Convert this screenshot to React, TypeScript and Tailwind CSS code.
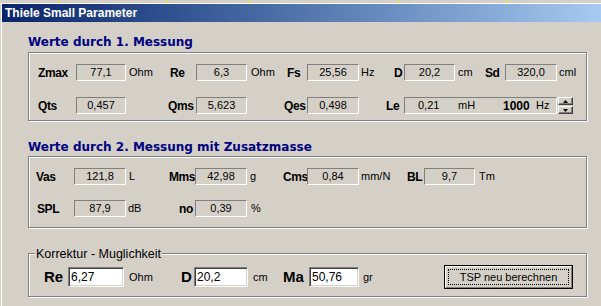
import type { ReactNode } from "react";

const sans = "font-['Liberation_Sans',Arial,sans-serif]";

function Box({ children, className }: { children: ReactNode; className?: string }) {
  return (
    <div
      className={`w-[559px] border border-[#808080] shadow-[inset_1px_1px_0_#ffffff,1px_1px_0_#ffffff] ${className ?? ""}`}
    >
      {children}
    </div>
  );
}

function Field({ className, children }: { className: string; children?: ReactNode }) {
  return (
    <div
      className={`h-[17px] shrink-0 border border-t-[#808080] border-l-[#808080] border-b-white border-r-white flex items-center justify-center text-[11px] text-black ${className}`}
    >
      {children}
    </div>
  );
}

function Label({ className, children }: { className: string; children: ReactNode }) {
  return (
    <span className={`shrink-0 whitespace-nowrap font-bold text-[12px] tracking-[-0.4px] text-black ${className}`}>
      {children}
    </span>
  );
}

function Unit({ className, children }: { className?: string; children: ReactNode }) {
  return <span className={`shrink-0 text-[11px] text-black ${className ?? ""}`}>{children}</span>;
}

function SpinButton({ up }: { up?: boolean }) {
  return (
    <div className="w-[15px] h-[8px] bg-[#d4d0c8] border border-t-white border-l-white border-b-[#404040] border-r-[#404040] shadow-[inset_-1px_-1px_0_#808080] flex items-center justify-center">
      <svg width="5" height="3" viewBox="0 0 5 3">
        {up ? <path d="M2.5 0 L5 3 L0 3 Z" fill="#000" /> : <path d="M0 0 L5 0 L2.5 3 Z" fill="#000" />}
      </svg>
    </div>
  );
}

function EditBox({ className, value }: { className: string; value: string }) {
  return (
    <input
      readOnly
      value={value}
      className={`h-[20px] shrink-0 bg-white border border-t-[#808080] border-l-[#808080] border-b-white border-r-white shadow-[inset_1px_1px_0_#404040,inset_-1px_-1px_0_#d4d0c8] pl-[2px] text-[12px] text-black outline-none ${className}`}
    />
  );
}

export default function App() {
  return (
    <div className={`w-[601px] h-[306px] overflow-hidden bg-[#d4d0c8] ${sans}`}>
      {/* strip behind the window */}
      <div className="h-[3px] flex">
        <div className="w-[58px]" />
        <div className="w-[1px] bg-[#f0f000]" />
        <div className="w-[107px]" />
        <div className="w-[1px] bg-[#f0f000]" />
        <div className="w-[81px]" />
        <div className="w-[1px] bg-[#f0f000]" />
        <div className="w-[150px]" />
        <div className="w-[1px] bg-[#f0f000]" />
        <div className="w-[107px]" />
        <div className="w-[1px] bg-[#f0f000]" />
      </div>
      <div className="h-[1px] bg-white" />

      <div className="flex h-[302px]">
        <div className="w-[1px]" />
        <div className="w-[1px] bg-white" />
        <div className="flex-1 flex flex-col">
          <div className="h-[18px] bg-linear-to-r from-[#0a246a] to-[#a6caf0] pl-[3px] leading-[18px] text-[12px] font-bold text-white">
            Thiele Small Parameter
          </div>

          <div className="pl-[26px] pt-[12px] flex flex-col">
            <div className="h-[16px] leading-[16px] text-[12px] font-bold text-[#000080] font-['DejaVu_Sans',Verdana,sans-serif]">
              Werte durch 1. Messung
            </div>
            <Box className="mt-[2px] pt-[11px] pb-[6px] flex flex-col gap-[16px]">
              <div className="flex items-center h-[17px] pl-[9px]">
                <Label className="w-[38px]">Zmax</Label>
                <Field className="w-[50px]">77,1</Field>
                <Unit className="w-[44px] pl-[3px]">Ohm</Unit>
                <Label className="w-[26px]">Re</Label>
                <Field className="w-[51px]">6,3</Field>
                <Unit className="w-[40px] pl-[4px]">Ohm</Unit>
                <Label className="w-[20px]">Fs</Label>
                <Field className="w-[52px]">25,56</Field>
                <Unit className="w-[35px] pl-[2px]">Hz</Unit>
                <Label className="w-[10px]">D</Label>
                <Field className="w-[51px]">20,2</Field>
                <Unit className="w-[30px] pl-[3px]">cm</Unit>
                <Label className="w-[20px]">Sd</Label>
                <Field className="w-[52px]">320,0</Field>
                <Unit className="pl-[2px]">cml</Unit>
              </div>
              <div className="flex items-center h-[17px] pl-[9px]">
                <Label className="w-[38px]">Qts</Label>
                <Field className="w-[50px]">0,457</Field>
                <div className="w-[42px] shrink-0" />
                <Label className="w-[28px]">Qms</Label>
                <Field className="w-[51px]">5,623</Field>
                <div className="w-[37px] shrink-0" />
                <Label className="w-[23px]">Qes</Label>
                <Field className="w-[52px]">0,498</Field>
                <div className="w-[27px] shrink-0" />
                <Label className="w-[18px]">Le</Label>
                <Field className="w-[153px] !justify-start pl-[13px]">
                  <span className="w-[40px]">0,21</span>
                  <span className="w-[45px]">mH</span>
                  <span className="w-[33px] font-bold text-[12px]">1000</span>
                  <span>Hz</span>
                </Field>
                <div className="ml-[1px] flex flex-col gap-[1px]">
                  <SpinButton up />
                  <SpinButton />
                </div>
              </div>
            </Box>

            <div className="mt-[18px] h-[16px] leading-[16px] text-[12px] font-bold text-[#000080] font-['DejaVu_Sans',Verdana,sans-serif]">
              Werte durch 2. Messung mit Zusatzmasse
            </div>
            <Box className="mt-[1px] pt-[11px] pb-[10px] flex flex-col gap-[15px]">
              <div className="flex items-center h-[17px] pl-[7px]">
                <Label className="w-[38px]">Vas</Label>
                <Field className="w-[52px]">121,8</Field>
                <Unit className="w-[43px] pl-[3px]">L</Unit>
                <Label className="w-[26px]">Mms</Label>
                <Field className="w-[52px]">42,98</Field>
                <Unit className="w-[36px] pl-[3px]">g</Unit>
                <Label className="w-[24px]">Cms</Label>
                <Field className="w-[52px]">0,84</Field>
                <Unit className="w-[48px] pl-[2px]">mm/N</Unit>
                <Label className="w-[17px]">BL</Label>
                <Field className="w-[51px]">9,7</Field>
                <Unit className="pl-[4px]">Tm</Unit>
              </div>
              <div className="flex items-center h-[17px] pl-[8px]">
                <Label className="w-[37px]">SPL</Label>
                <Field className="w-[52px]">87,9</Field>
                <Unit className="w-[53px] pl-[2px]">dB</Unit>
                <Label className="w-[16px]">no</Label>
                <Field className="w-[52px]">0,39</Field>
                <Unit className="pl-[4px]">%</Unit>
              </div>
            </Box>

            <Box className="relative mt-[25px] pt-[11px] pb-[7px]">
              <span className="absolute left-[6px] -top-[7px] px-[1px] bg-[#d4d0c8] text-[12.5px] leading-[14px] text-black">
                Korrektur - Muglichkeit
              </span>
              <div className="flex items-center h-[24px] pl-[15px]">
                <span className="w-[24px] shrink-0 font-bold text-[15px]">Re</span>
                <EditBox className="w-[56px]" value="6,27" />
                <Unit className="w-[57px] pl-[5px]">Ohm</Unit>
                <span className="w-[13px] shrink-0 font-bold text-[15px]">D</span>
                <EditBox className="w-[54px]" value="20,2" />
                <Unit className="w-[35px] pl-[5px]">cm</Unit>
                <span className="w-[26px] shrink-0 font-bold text-[15px]">Ma</span>
                <EditBox className="w-[50px]" value="50,76" />
                <Unit className="w-[85px] pl-[4px]">gr</Unit>
                <button className="w-[129px] h-[24px] shrink-0 border border-black bg-[#d4d0c8] p-0">
                  <div className="h-full w-full border border-t-white border-l-white border-b-[#808080] border-r-[#808080] p-[2px]">
                    <div className="h-full w-full border border-dotted border-black flex items-center justify-center text-[11px] text-black">
                      TSP neu berechnen
                    </div>
                  </div>
                </button>
              </div>
            </Box>
          </div>
        </div>
      </div>
    </div>
  );
}
